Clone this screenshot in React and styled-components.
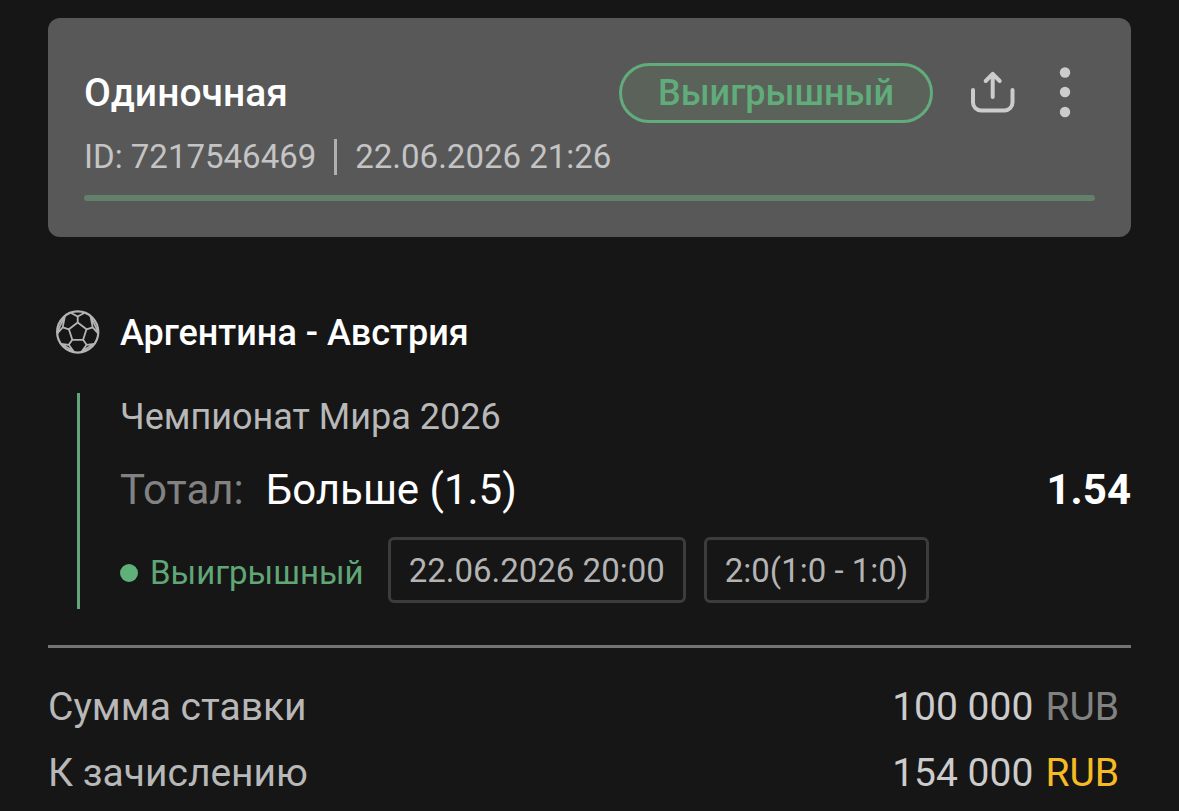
import React from "react";
import styled, { createGlobalStyle } from "styled-components";

const GlobalStyle = createGlobalStyle`
  * { box-sizing: border-box; }
  body {
    margin: 0;
    background: #161616;
    color: #ffffff;
    font-family: Roboto, "Noto Sans", sans-serif;
  }
  h1, h2, p, dl, dd, dt { margin: 0; font-weight: 400; }
`;

const Page = styled.main`
  padding: 18px 48px;
`;

const Card = styled.header`
  padding: 45px 36px 36px;
  border-radius: 12px;
  background: #585858;
`;

const CardTop = styled.div`
  display: flex;
  align-items: center;
  height: 60px;
`;

const CardTitle = styled.h1`
  flex: 1;
  font-size: 39px;
  line-height: 60px;
  && { font-weight: 500; }
`;

const Badge = styled.span`
  display: flex;
  align-items: center;
  height: 60px;
  margin-right: 30px;
  padding: 0 36px;
  border: 3px solid #62ac7c;
  border-radius: 30px;
  background: #5a6259;
  color: #60ac7a;
  font-size: 36px;
  font-weight: 500;
`;

const IconButton = styled.button`
  display: flex;
  align-items: center;
  justify-content: center;
  width: 60px;
  height: 60px;
  padding: 0;
  border: 0;
  background: none;
  color: #cccccc;
  cursor: pointer;

  & + & { margin-left: 12px; }
`;

const Meta = styled.div`
  display: flex;
  align-items: center;
  margin-top: 14px;
  color: #c4c4c4;
  font-size: 33px;
  line-height: 40px;
`;

const MetaDivider = styled.span`
  width: 3px;
  height: 36px;
  margin: 0 18px;
  background: #b0b0b0;
`;

const ResultBar = styled.div`
  height: 6px;
  margin-top: 18px;
  border-radius: 3px;
  background: #62806a;
`;

const Match = styled.section`
  padding-top: 73px;
`;

const MatchHeader = styled.div`
  display: flex;
  align-items: center;
  gap: 20px;
  padding-left: 8px;
  height: 44px;
`;

const Teams = styled.h2`
  font-size: 36px;
  line-height: 44px;
  padding-top: 2px;
  && { font-weight: 500; }
`;

const Leg = styled.div`
  margin: 39px 0 0 29px;
  padding: 0 0 6px 40px;
  border-left: 3px solid #62a677;
`;

const League = styled.p`
  color: #b8b8b8;
  font-size: 36px;
  line-height: 48px;
`;

const Pick = styled.div`
  display: flex;
  align-items: center;
  gap: 22px;
  margin: 25px 0 23px;
  font-size: 42px;
  line-height: 48px;
`;

const Market = styled.span`
  color: #828282;
`;

const Odds = styled.strong`
  margin-left: auto;
  font-weight: 700;
`;

const Details = styled.div`
  display: flex;
  align-items: center;
  gap: 18px;
`;

const Status = styled.span`
  display: flex;
  align-items: center;
  gap: 12px;
  margin-right: 6px;
  padding-top: 5px;
  color: #60a676;
  font-size: 33px;

  &::before {
    content: "";
    width: 18px;
    height: 18px;
    border-radius: 50%;
    background: #5fb079;
  }
`;

const Chip = styled.span`
  display: flex;
  align-items: center;
  height: 66px;
  padding: 0 18px;
  border: 3px solid #3c3c3c;
  border-radius: 6px;
  color: #b4b4b4;
  font-size: 33px;
`;

const Summary = styled.dl`
  margin-top: 36px;
  padding: 35px 12px 0 0;
  border-top: 3px solid #747474;
`;

const SummaryRow = styled.div`
  display: flex;
  justify-content: space-between;
  color: #b8b8b8;
  font-size: 39px;
  line-height: 48px;

  & + & { margin-top: 18px; }
`;

const Amount = styled.dd`
  display: flex;
  gap: 12px;
  color: #cccccc;
`;

const Currency = styled.span`
  color: ${(p) => (p.$highlight ? "#f6bb23" : "#828282")};
`;

function ShareIcon() {
  return (
    <svg width="60" height="60" viewBox="0 0 60 60" fill="none" stroke="currentColor" strokeWidth="4" strokeLinecap="round" strokeLinejoin="round" aria-hidden="true">
      <path d="M10 27v12.500a8 8 0 0 0 8 8h23.500a8 8 0 0 0 8-8V27" />
      <path d="M29.700 34V11M22.700 18l7-7.200 7 7.200" />
    </svg>
  );
}

function DotsIcon() {
  return (
    <svg width="60" height="60" viewBox="0 0 60 60" fill="currentColor" aria-hidden="true">
      <circle cx="30" cy="9.500" r="5.200" />
      <circle cx="30" cy="29" r="5.200" />
      <circle cx="30" cy="49" r="5.200" />
    </svg>
  );
}

function BallIcon() {
  return (
    <svg width="44" height="44" viewBox="0 0 44 44" fill="none" stroke="#b4b4b4" strokeWidth="1.800" strokeLinejoin="round" aria-hidden="true">
      <circle cx="21.700" cy="22" r="20.600" strokeWidth="2.200" />
      <path d="M21.700 12.500l8.800 6.800-3.400 10.500H16.300L12.900 19.300z" />
      <path d="M21.700 12.500V6.500M30.500 19.300l6.200-2M27.100 29.800l3.500 5M16.300 29.800l-3.500 5M12.900 19.300l-6.200-2" />
      <path d="M14.700 2.700l7 3.800 7-3.800" />
      <path d="M34.500 6.200l2.200 11.100 5.400 6M34.500 6.200q4 8 7.200 15" />
      <path d="M8.900 6.200L6.700 17.300l-5.400 6M8.900 6.200q-4 8-7.200 15" />
      <path d="M38.300 34l-7.700.800-5.400 7.500M38.300 34q-6.500 3-13.100 8.300" />
      <path d="M5.100 34l7.700.800 5.400 7.500M5.100 34q6.500 3 13.100 8.300" />
    </svg>
  );
}

const totals = [
  { label: "Сумма ставки", amount: "100 000", highlight: false },
  { label: "К зачислению", amount: "154 000", highlight: true },
];

export default function App() {
  return (
    <>
      <GlobalStyle />
      <Page>
        <Card>
          <CardTop>
            <CardTitle>Одиночная</CardTitle>
            <Badge>Выигрышный</Badge>
            <IconButton type="button" aria-label="Поделиться"><ShareIcon /></IconButton>
            <IconButton type="button" aria-label="Меню"><DotsIcon /></IconButton>
          </CardTop>
          <Meta>
            <span>ID: 7217546469</span>
            <MetaDivider />
            <time>22.06.2026 21:26</time>
          </Meta>
          <ResultBar />
        </Card>

        <Match>
          <MatchHeader>
            <BallIcon />
            <Teams>Аргентина - Австрия</Teams>
          </MatchHeader>
          <Leg>
            <League>Чемпионат Мира 2026</League>
            <Pick>
              <Market>Тотал:</Market>
              <span>Больше (1.5)</span>
              <Odds>1.54</Odds>
            </Pick>
            <Details>
              <Status>Выигрышный</Status>
              <Chip>22.06.2026 20:00</Chip>
              <Chip>2:0(1:0 - 1:0)</Chip>
            </Details>
          </Leg>
        </Match>

        <Summary>
          {totals.map((row) => (
            <SummaryRow key={row.label}>
              <dt>{row.label}</dt>
              <Amount>
                {row.amount}
                <Currency $highlight={row.highlight}>RUB</Currency>
              </Amount>
            </SummaryRow>
          ))}
        </Summary>
      </Page>
    </>
  );
}
